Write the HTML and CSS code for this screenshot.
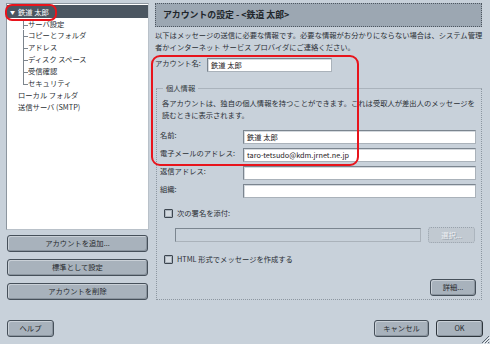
FILE: index.html
```html
<!DOCTYPE html>
<html lang="ja">
<head>
<meta charset="utf-8">
<link rel="stylesheet" href="styles.css">
</head>
<body>
<div class="win">
  <div class="main">
    <div class="left">
      <div class="tree">
        <div class="sel"><span class="tri">▼</span>鉄道 太郎</div>
        <div class="sub">
          <div class="it">サーバ設定</div>
          <div class="it">コピーとフォルダ</div>
          <div class="it">アドレス</div>
          <div class="it">ディスク スペース</div>
          <div class="it">受信確認</div>
          <div class="it last">セキュリティ</div>
        </div>
        <div class="top">ローカル フォルダ</div>
        <div class="top">送信サーバ (SMTP)</div>
      </div>
      <div class="lbtns">
        <div class="btn wide">アカウントを追加...</div>
        <div class="btn wide">標準として設定</div>
        <div class="btn wide">アカウントを削除</div>
      </div>
    </div>
    <div class="right">
      <div class="hdr">アカウントの設定 - &lt;鉄道 太郎&gt;</div>
      <p class="desc">以下はメッセージの送信に必要な情報です。必要な情報がお分かりにならない場合は、システム管理<br>者かインターネット サービス プロバイダにご連絡ください。</p>
      <div class="acct"><span class="alab">アカウント名:</span><span class="inp aname">鉄道 太郎</span></div>
      <fieldset class="grp">
        <legend>個人情報</legend>
        <p class="gdesc">各アカウントは、独自の個人情報を持つことができます。これは受取人が差出人のメッセージを<br>読むときに表示されます。</p>
        <div class="row first"><span class="rlab">名前:</span><span class="inp field">鉄道 太郎</span></div>
        <div class="row"><span class="rlab">電子メールのアドレス:</span><span class="inp field">taro-tetsudo@kdm.jrnet.ne.jp</span></div>
        <div class="row"><span class="rlab">返信アドレス:</span><span class="inp field"></span></div>
        <div class="row"><span class="rlab">組織:</span><span class="inp field"></span></div>
        <div class="chk sig"><span class="box"></span>次の署名を添付:</div>
        <div class="sigrow"><span class="inp dis"></span><div class="btn choose">選択...</div></div>
        <div class="chk html"><span class="box"></span>HTML 形式でメッセージを作成する</div>
        <div class="adv"><div class="btn advb">詳細...</div></div>
      </fieldset>
    </div>
  </div>
  <div class="foot">
    <div class="btn help">ヘルプ</div>
    <div class="fright">
      <div class="btn cancel">キャンセル</div>
      <div class="btn ok">OK</div>
    </div>
  </div>
</div>
<div class="ring r1"></div>
<div class="ring r2"></div>
<svg class="grip" width="10" height="10" viewBox="0 0 10 10">
  <path d="M9 2 L2 9 M9 5 L5 9 M9 8 L8 9" stroke="#5b6570" stroke-width="1"/>
  <path d="M10 3 L3 10 M10 6 L6 10" stroke="#f2f4f6" stroke-width="1"/>
</svg>
</body>
</html>
```
FILE: styles.css
```css
* { box-sizing: border-box; }
html, body { margin: 0; padding: 0; }
body {
  width: 490px;
  height: 344px;
  overflow: hidden;
  background: #c8d1da;
  font-family: "Noto Sans CJK JP", "Noto Sans", sans-serif;
  font-size: 7.3px;
  color: #2a2f35;
  position: relative;
}
p { margin: 0; }
.win { padding: 3px 0 0 6px; }
.main { display: flex; height: 297px; }
.left { width: 143px; display: flex; flex-direction: column; }
.tree {
  height: 229px;
  background: #fff;
  border: 1px solid #8d969f;
  border-right-color: #b9c1c9;
  border-bottom-color: #b9c1c9;
}
.sel {
  margin-top: 1px;
  height: 13px;
  line-height: 13px;
  background: #4b5661;
  color: #fff;
  padding-left: 3px;
}
.tri { display: inline-block; font-size: 5px; width: 8px; vertical-align: 1px; }
.sub { padding-top: 0.5px; }
.it {
  line-height: 11.9px;
  height: 11.9px;
  padding-left: 21px;
  background-image: linear-gradient(#7d858d, #7d858d), linear-gradient(#7d858d, #7d858d);
  background-repeat: no-repeat;
  background-size: 1px 100%, 5px 1px;
  background-position: 16px 0, 16px 6px;
}
.it:first-child { background-position: 16px -1px, 16px 6px; }
.it.last { background-size: 1px 7px, 5px 1px; }
.top { line-height: 11.9px; height: 11.9px; padding-left: 11px; }
.lbtns { margin-top: 5px; padding-left: 1px; display: flex; flex-direction: column; gap: 7px; }
.btn {
  height: 17px;
  line-height: 15px;
  text-align: center;
  background: #a8b2bc;
  border: 1px solid #46505a;
  border-radius: 3px;
  box-shadow: inset 1px 1px 0 #c9d0d7, inset -1px -1px 0 #8a949e;
  color: #26292d;
}
.wide { width: 141px; }
.right { margin-left: 4px; width: 330px; display: flex; flex-direction: column; }
.hdr {
  margin: 0 0 0 2px;
  width: 327px;
  height: 24px;
  background: #9ca7b2;
  border: 1px dotted #4d5660;
  padding-left: 7px;
  line-height: 22px;
  font-weight: bold;
  font-size: 8.9px;
  color: #20252a;
}
.desc { margin: 2px 0 0 2px; line-height: 12px; }
.acct { display: flex; margin: 5px 0 0 2px; height: 14px; }
.alab { width: 52px; line-height: 10px; }
.inp {
  display: block;
  height: 14px;
  background: #fff;
  border: 1px solid #7b858f;
  border-right-color: #aab2ba;
  border-bottom-color: #aab2ba;
  box-shadow: inset 1px 1px 0 #d4d9de;
  padding-left: 3px;
  line-height: 12px;
  color: #1d2024;
}
.aname { width: 125px; }
.grp {
  margin: 11px 0 0 3px;
  width: 326px;
  flex: 1;
  padding: 0 0 0 5px;
  border: 1px dotted #8d97a1;
  border-top: 1px solid #aab3bc;
  min-width: 0;
}
.grp legend {
  padding: 0 3px;
  margin-left: 1px;
  line-height: 10px;
  color: #333a41;
}
.gdesc { margin-top: 4px; line-height: 12px; }
.row { display: flex; margin: 4px 0 0 -2px; height: 14px; }
.row.first { margin-top: 9px; }
.rlab { width: 83px; line-height: 10px; }
.field { width: 233px; }
.chk { display: flex; align-items: center; height: 10px; margin-left: 2px; }
.chk.sig { margin-top: 10px; }
.chk.html { margin-top: 11px; }
.box {
  width: 9px;
  height: 9px;
  border: 1px solid #3d4650;
  border-radius: 1px;
  background: #d3d9df;
  box-shadow: inset 0 0 0 1px #aab3bc;
  margin-right: 4px;
}
.sigrow { display: flex; margin: 9px 0 0 13px; height: 16px; }
.inp.dis { width: 246px; margin-top: 1px; background: #c8d1da; box-shadow: none; }
.choose {
  width: 47px;
  height: 16px;
  margin-left: 7px;
  background: #c1c9d1;
  border: 1px dotted #98a2ac;
  box-shadow: none;
  color: #eef1f4;
  text-shadow: 1px 1px 0 #98a2ac;
}
.adv { display: flex; justify-content: flex-end; margin: 15px 5px 0 0; }
.advb { width: 46px; }
.foot { display: flex; justify-content: space-between; margin-top: 20px; padding: 0 7px 0 1px; }
.help { width: 47px; }
.fright { display: flex; gap: 7px; }
.cancel { width: 55px; }
.ok { width: 47px; border-color: #2e353c; border-width: 1.5px; }
.ring {
  position: absolute;
  border: 2.5px solid #e8141c;
}
.r1 { left: 5px; top: 4px; width: 52px; height: 17px; border-radius: 7px; }
.r2 { left: 151px; top: 55px; width: 208px; height: 111px; border-radius: 9px; }
.grip { position: absolute; right: 0; bottom: 0; }
```
